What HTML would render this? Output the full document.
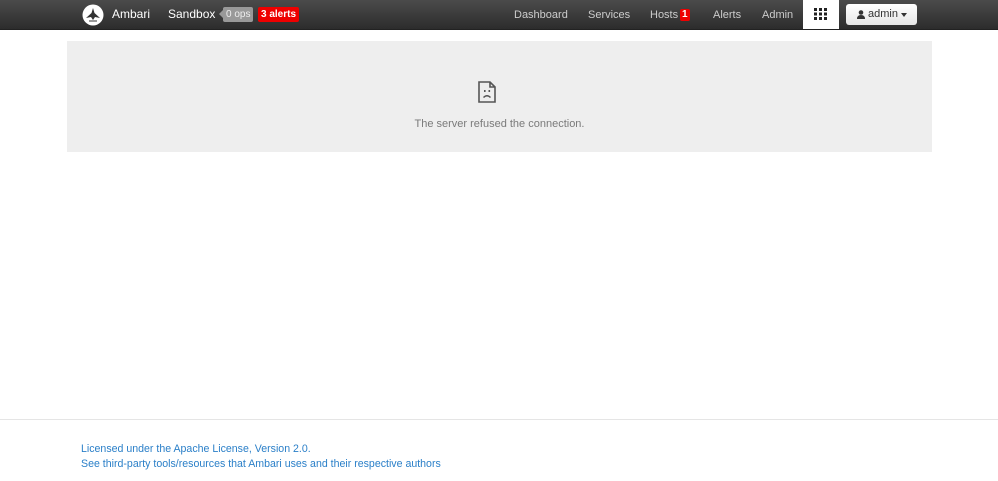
<!DOCTYPE html>
<html><head><style>
body{margin:0;width:998px;height:481px;background:#fff;font-family:"Liberation Sans",sans-serif;position:relative;overflow:hidden}
.nav{position:absolute;left:0;top:0;width:998px;height:29px;background:linear-gradient(#4b4b4b,#2c2c2c);border-bottom:1px solid #222}
.t{position:absolute;color:#fff;font-size:12px;top:7px}
.n{position:absolute;color:#ccc;font-size:11px;top:9px}
.badge{position:absolute;font-size:10px;font-weight:bold;color:#fff;border-radius:2px;height:15px;line-height:15px;padding:0 3px;top:7px;text-align:center;white-space:nowrap}
.box{position:absolute;left:67px;top:41px;width:865px;height:111px;background:#eee}
.foot{position:absolute;left:0;top:419px;width:998px;border-top:1px solid #e5e5e5}
.l{position:absolute;left:81px;font-size:10.6px;color:#2a7fc8}
</style></head><body>
<div class="nav">
<svg style="position:absolute;left:82px;top:4px" width="22" height="22" viewBox="0 0 22 22"><circle cx="11" cy="11" r="10.5" fill="#fff"/><path d="M11 4 L12.5 9 L18 14 L13 13 L11 16 L9 13 L4 14 L9.5 9 Z" fill="#333"/><path d="M7 17h8" stroke="#333" stroke-width="1"/></svg>
<span class="t" style="left:112px">Ambari</span>
<span class="t" style="left:168px">Sandbox</span>
<span class="badge" style="left:223px;background:#999;font-weight:normal;color:#eee">0 ops</span>
<span style="position:absolute;left:219px;top:10px;width:0;height:0;border:4px solid transparent;border-right-color:#999;border-left:0"></span>
<span class="badge" style="left:258px;background:#e00">3 alerts</span>
<span class="n" style="left:514px">Dashboard</span>
<span class="n" style="left:588px">Services</span>
<span class="n" style="left:650px">Hosts</span>
<span class="badge" style="left:680px;background:#e00;padding:0 2px;top:9px;height:12px;line-height:12px">1</span>
<span class="n" style="left:713px">Alerts</span>
<span class="n" style="left:762px">Admin</span>
<div style="position:absolute;left:803px;top:0;width:36px;height:29px;background:#fff">
<svg style="position:absolute;left:11px;top:8px" width="13" height="12"><g fill="#222"><rect x="0" y="0" width="3" height="3"/><rect x="5" y="0" width="3" height="3"/><rect x="10" y="0" width="3" height="3"/><rect x="0" y="4.5" width="3" height="3"/><rect x="5" y="4.5" width="3" height="3"/><rect x="10" y="4.5" width="3" height="3"/><rect x="0" y="9" width="3" height="3"/><rect x="5" y="9" width="3" height="3"/><rect x="10" y="9" width="3" height="3"/></g></svg></div>
<div style="position:absolute;left:846px;top:4px;width:71px;height:21px;background:linear-gradient(#fff,#e6e6e6);border-radius:3px;font-size:11px;color:#333;line-height:21px">
<svg style="position:absolute;left:11px;top:6px" width="8" height="9"><circle cx="4" cy="2.5" r="2.3" fill="#333"/><path d="M0 9 Q0 5 4 5 Q8 5 8 9Z" fill="#333"/></svg>
<span style="position:absolute;left:22px">admin</span>
<span style="position:absolute;left:55px;top:9px;border:3px solid transparent;border-top:4px solid #333;border-bottom:0"></span></div>
</div>
<div class="box">
<svg style="position:absolute;left:411px;top:40px" width="18" height="22" viewBox="0 0 18 22"><path d="M1 1H12L17 6V21H1Z M12 1V6H17" fill="none" stroke="#555" stroke-width="1.6"/><rect x="6" y="9" width="1.6" height="2" fill="#555"/><rect x="10.5" y="9" width="1.6" height="2" fill="#555"/><path d="M5.5 16.5Q9 13 12.5 16.5" fill="none" stroke="#555" stroke-width="1.4"/></svg>
<div style="position:absolute;left:0;width:865px;top:77px;text-align:center;font-size:11px;color:#7a7a7a">The server refused the connection.</div>
</div>
<div class="foot"></div>
<div class="l" style="top:443px">Licensed under the Apache License, Version 2.0.</div>
<div class="l" style="top:458px">See third-party tools/resources that Ambari uses and their respective authors</div>
</body></html>
